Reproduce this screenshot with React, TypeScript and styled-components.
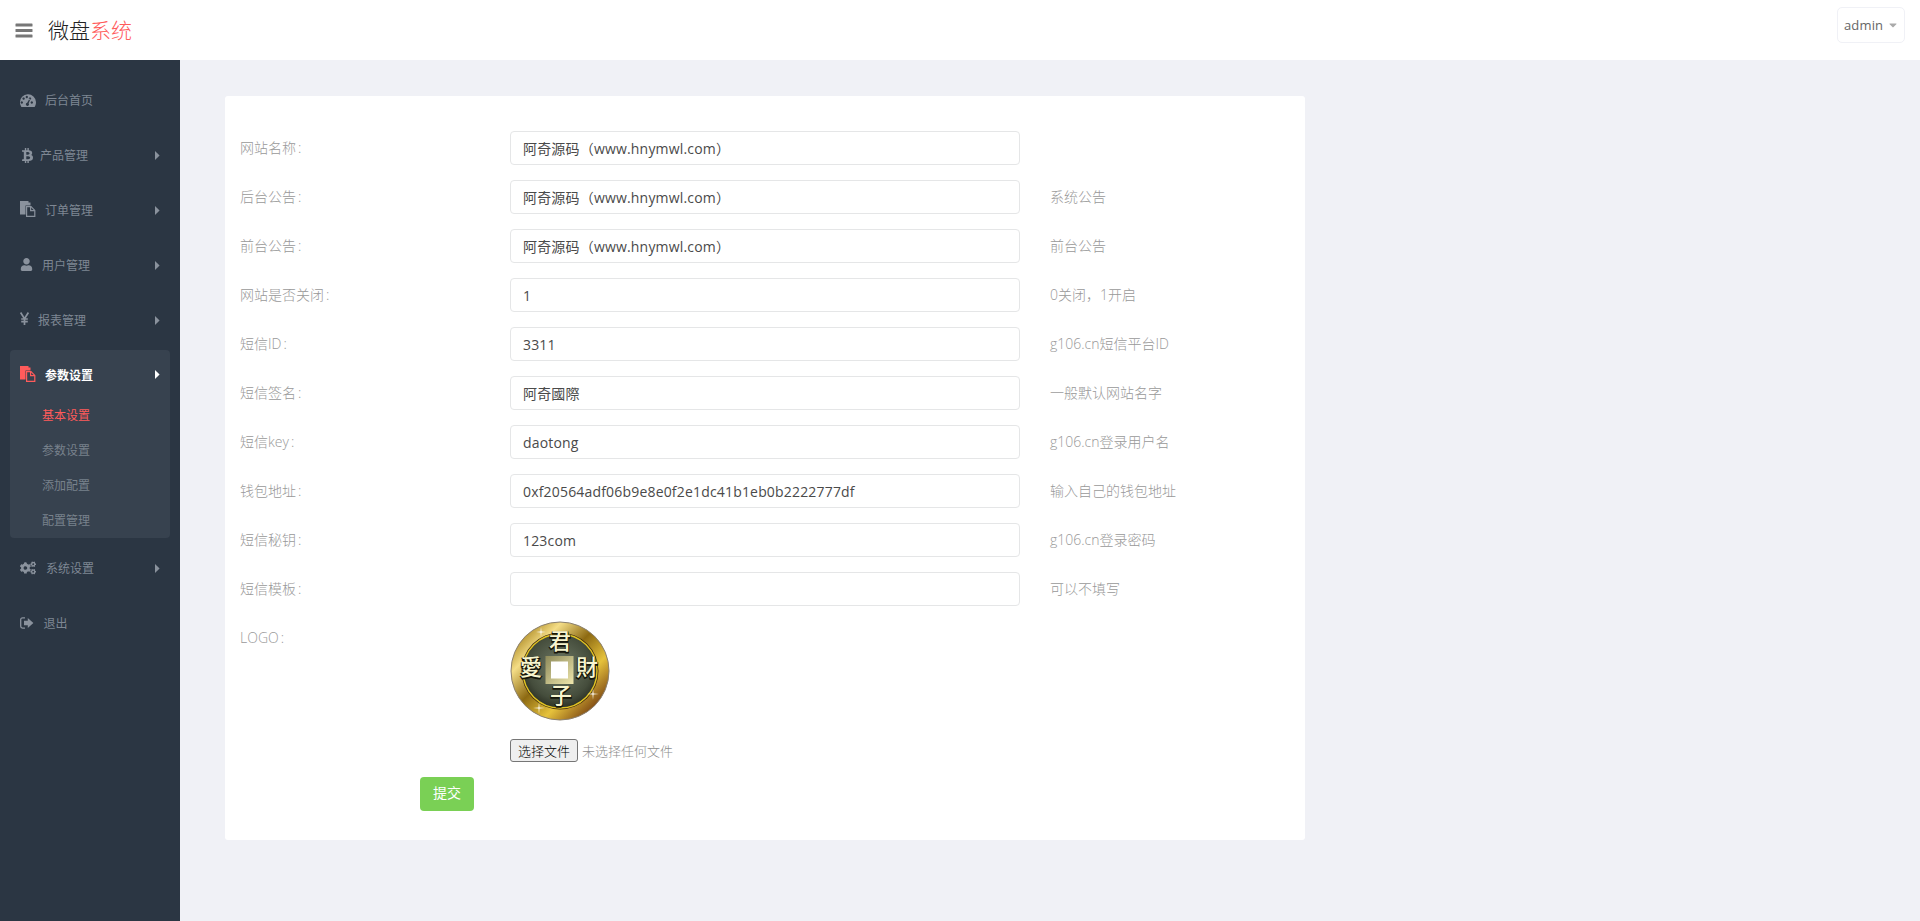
import React from 'react';
import styled, { createGlobalStyle } from 'styled-components';
import { FaBtc, FaUser, FaCogs, FaCaretDown } from 'react-icons/fa';

const FONT = `"Open Sans", "Noto Sans CJK SC", sans-serif`;

const Global = createGlobalStyle`
  html, body { margin: 0; padding: 0; background: #f0f1f6; }
  html { height: 921px; overflow: hidden; }
  body { font-family: ${FONT}; font-size: 14px; height: 921px; overflow: hidden; }
  * { box-sizing: border-box; }
`;

const Header = styled.header`
  height: 60px; background: #fff; display: flex; align-items: center; padding: 0 15px;
`;
const Burger = styled.span`
  display: flex; color: #777; width: 33px;
`;
const Title = styled.div`
  font-size: 21px; color: #222; font-weight: 300; margin-top: -2px;
  span { color: #ff5b5b; }
`;
const UserBtn = styled.button`
  margin-left: auto; align-self: flex-start; margin-top: 7px; width: 68px; height: 36px; background: #fff;
  border: 1px solid #f0f1f6; border-radius: 5px; letter-spacing: 0.15px;
  color: #666; font: 13px ${FONT}; display: flex; align-items: center; justify-content: space-between; padding: 0 5px 0 6px;
  svg { color: #aaa; font-size: 12px; }
`;
const Body = styled.div`
  display: flex; height: 861px;
`;
const Side = styled.nav`
  width: 180px; flex: none; background: #2b3643; padding: 15px 10px 0; display: flex; flex-direction: column; gap: 5px;
`;
const Item = styled.div<{ $active?: boolean }>`
  height: 50px; padding: 0 10px; display: flex; align-items: center; font-size: 12px;
  color: ${p => (p.$active ? '#fff' : '#7e8793')}; font-weight: ${p => (p.$active ? 700 : 400)};
`;
const NavIcon = styled.span<{ $w: number; $active?: boolean; $size?: number; $up?: number }>`
  width: ${p => p.$w}px; flex: none; display: flex; align-items: center; font-size: ${p => p.$size ?? 14}px;
  color: ${p => (p.$active ? '#ff5b5b' : '#8a929d')};
  margin-top: ${p => -(p.$up ?? 0)}px;
`;
const Caret = styled.span<{ $active?: boolean }>`
  margin-left: auto; display: flex; color: ${p => (p.$active ? '#fff' : '#8a929d')};
`;
const Group = styled.div`
  background: #37424f; border-radius: 4px; height: 188px;
  ${Item} { height: 47px; padding-top: 2px; }
`;
const Sub = styled.div<{ $on?: boolean }>`
  height: 35px; padding-left: 32px; display: flex; align-items: center; font-size: 12px;
  color: ${p => (p.$on ? '#ff5b5b' : '#78818c')};
`;
const Main = styled.main`
  flex: 1; padding: 36px 45px;
`;
const Card = styled.form`
  width: 1080px; height: 744px; background: #fff; border-radius: 3px; padding: 35px 15px 0;
  display: flex; flex-direction: column; gap: 15px;
`;
const Row = styled.div`
  display: grid; grid-template-columns: 270px 510px auto; align-items: start;
`;
const Label = styled.label`
  height: 34px; line-height: 34px; color: #999; font-weight: 300;
`;
const Colon = styled.span`
  margin-left: 2px;
`;
const Input = styled.input`
  width: 510px; height: 34px; border: 1px solid #e5e6e7; border-radius: 4px; padding: 0 12px; color: #4a4a4a;
  font: 14px ${FONT}; letter-spacing: 0.18px; outline: none;
`;
const Note = styled.div`
  height: 34px; line-height: 34px; color: #999; padding-left: 30px; font-weight: 300;
`;
const Logo = styled.div`
  display: flex; flex-direction: column; align-items: flex-start;
`;
const FileRow = styled.div`
  display: flex; align-items: center; gap: 4px; margin-top: 18px; color: #8d8d8d; font-size: 13px; font-weight: 300;
`;
const FileBtn = styled.button`
  width: 68px; height: 23px; padding: 0; font: 300 13px ${FONT}; color: #000; background: #efefef; border: 1px solid #767676; border-radius: 3px;
`;
const Submit = styled.button`
  margin: 0 0 0 180px; width: 54px; height: 34px; border: 0; border-radius: 4px; background: #7ad055; color: #fff; font: 14px ${FONT}; line-height: 30px; padding: 0 0 3px;
`;

const rows: [string, string, string][] = [
  ['网站名称', '阿奇源码（www.hnymwl.com）', ''],
  ['后台公告', '阿奇源码（www.hnymwl.com）', '系统公告'],
  ['前台公告', '阿奇源码（www.hnymwl.com）', '前台公告'],
  ['网站是否关闭', '1', '0关闭，1开启'],
  ['短信ID', '3311', 'g106.cn短信平台ID'],
  ['短信签名', '阿奇國際', '一般默认网站名字'],
  ['短信key', 'daotong', 'g106.cn登录用户名'],
  ['钱包地址', '0xf20564adf06b9e8e0f2e1dc41b1eb0b2222777df', '输入自己的钱包地址'],
  ['短信秘钥', '123com', 'g106.cn登录密码'],
  ['短信模板', '', '可以不填写'],
];

const BarsIcon = () => (
  <svg width="18" height="15" viewBox="0 0 18 15" fill="currentColor">
    <rect x="0.5" y="0.5" width="17" height="3" rx="0.6" />
    <rect x="0.5" y="6" width="17" height="3" rx="0.6" />
    <rect x="0.5" y="11.5" width="17" height="3" rx="0.6" />
  </svg>
);

const TachIcon = () => (
  <svg width="16" height="13" viewBox="0 0 16 13" fill="currentColor">
    <path
      fillRule="evenodd"
      d="M0 8.6A8 8 0 0 1 16 8C16 10 15.5 11.6 14.6 13H1.4C.5 11.6 0 10.2 0 8.6ZM3 8.5a1.2 1.2 0 1 0 0 .01ZM4.8 4.6a1.2 1.2 0 1 0 0 .01ZM8 3a1.2 1.2 0 1 0 0 .01ZM13 8.5a1.2 1.2 0 1 0 0 .01ZM11.2 4.6a1.2 1.2 0 1 0 0 .01ZM9.6 4.6 7.2 8.8a1.5 1.5 0 1 0 1.4.6L10.4 5Z"
    />
  </svg>
);

const FilesIcon = () => (
  <svg width="16" height="16" viewBox="0 0 16 16" fill="currentColor">
    <path d="M0 0H8.5V1.5H10.5V4.5H5.5V13.5H0Z" />
    <path d="M6.6 5.6H11L14.8 9.4V15.4H6.6Z" fill="none" stroke="currentColor" strokeWidth="1.2" />
    <path d="M10.6 5.6V9.6H14.8" fill="none" stroke="currentColor" strokeWidth="1.2" />
  </svg>
);

const YenIcon = () => (
  <svg width="9" height="13" viewBox="0 0 9 13" fill="none" stroke="currentColor" strokeWidth="1.7">
    <path d="M.6.5 4.5 6.6 8.4.5M4.5 6V13M1.2 7H7.8M1.2 9.6H7.8" />
  </svg>
);

const OutIcon = () => (
  <svg width="14" height="12" viewBox="0 0 14 12" fill="currentColor">
    <path d="M5 .9H2.5C1.4.9.7 1.6.7 2.7V9.3C.7 10.4 1.4 11.1 2.5 11.1H5" fill="none" stroke="currentColor" strokeWidth="1.3" />
    <path d="M7.8 1 13.4 6 7.8 11V8.2H4V3.8H7.8Z" />
  </svg>
);

const CaretIcon = () => (
  <svg width="5" height="9" viewBox="0 0 5 9" fill="currentColor">
    <path d="M0 0 4.6 4.5 0 9Z" />
  </svg>
);

const Spark = ({ x, y, r }: { x: number; y: number; r: number }) => (
  <path
    d={`M${x - r} ${y}L${x - 0.5} ${y - 0.5}L${x} ${y - r}L${x + 0.5} ${y - 0.5}L${x + r} ${y}L${x + 0.5} ${y + 0.5}L${x} ${y + r}L${x - 0.5} ${y + 0.5}Z`}
    fill="#fff"
  />
);

function Coin() {
  return (
    <svg width="100" height="100" viewBox="0 0 100 100">
      <defs>
        <linearGradient id="rim" x1="0.1" y1="0.1" x2="0.9" y2="0.9">
          <stop offset="0" stopColor="#a9851f" />
          <stop offset="0.2" stopColor="#f4dd86" />
          <stop offset="0.45" stopColor="#8d6a12" />
          <stop offset="0.7" stopColor="#e6c23c" />
          <stop offset="1" stopColor="#6f370d" />
        </linearGradient>
        <radialGradient id="face" cx="0.5" cy="0.45" r="0.62">
          <stop offset="0" stopColor="#717c68" />
          <stop offset="0.7" stopColor="#454d3c" />
          <stop offset="1" stopColor="#1f2218" />
        </radialGradient>
        <linearGradient id="sq" x1="0" y1="0" x2="1" y2="1">
          <stop offset="0" stopColor="#8d8a5a" />
          <stop offset="1" stopColor="#efe7ad" />
        </linearGradient>
      </defs>
      <circle cx="50" cy="50" r="49" fill="url(#rim)" stroke="#8a8070" strokeWidth="1" />
      <circle cx="50" cy="50" r="38.5" fill="#3d2a10" />
      <circle cx="50" cy="50" r="37" fill="url(#face)" stroke="#e2c422" strokeWidth="1.4" />
      <rect x="35.5" y="35" width="28" height="28" fill="url(#sq)" />
      <rect x="41" y="40.5" width="17" height="17" fill="#fff" />
      <g fontFamily='"Noto Sans CJK TC", sans-serif' fontSize="22" fontWeight="500" textAnchor="middle" fill="#15150a" stroke="#15150a" strokeWidth="1.6">
        <text x="50" y="29">君</text>
        <text x="51" y="83">子</text>
        <text x="21" y="55">愛</text>
        <text x="77" y="55">財</text>
      </g>
      <g fontFamily='"Noto Sans CJK TC", sans-serif' fontSize="22" fontWeight="500" textAnchor="middle" fill="#f8f5cf">
        <text x="50" y="28">君</text>
        <text x="51" y="82">子</text>
        <text x="21" y="54">愛</text>
        <text x="77" y="54">財</text>
      </g>
      <Spark x={31} y={11} r={5} />
      <Spark x={29} y={87} r={6} />
      <Spark x={83} y={73} r={6} />
    </svg>
  );
}

export default function App() {
  return (
    <>
      <Global />
      <Header>
        <Burger><BarsIcon /></Burger>
        <Title>微盘<span>系统</span></Title>
        <UserBtn type="button">admin <FaCaretDown /></UserBtn>
      </Header>
      <Body>
        <Side>
          <Item><NavIcon $w={25}><TachIcon /></NavIcon>后台首页</Item>
          <Item><NavIcon $w={20} $size={15}><FaBtc /></NavIcon>产品管理<Caret><CaretIcon /></Caret></Item>
          <Item><NavIcon $w={25} $up={2}><FilesIcon /></NavIcon>订单管理<Caret><CaretIcon /></Caret></Item>
          <Item><NavIcon $w={22} $up={2} $size={13}><FaUser /></NavIcon>用户管理<Caret><CaretIcon /></Caret></Item>
          <Item><NavIcon $w={18} $up={3}><YenIcon /></NavIcon>报表管理<Caret><CaretIcon /></Caret></Item>
          <Group>
            <Item $active><NavIcon $w={25} $active $up={2}><FilesIcon /></NavIcon>参数设置<Caret $active><CaretIcon /></Caret></Item>
            <Sub $on>基本设置</Sub>
            <Sub>参数设置</Sub>
            <Sub>添加配置</Sub>
            <Sub>配置管理</Sub>
          </Group>
          <Item><NavIcon $w={26} $size={16}><FaCogs /></NavIcon>系统设置<Caret><CaretIcon /></Caret></Item>
          <Item><NavIcon $w={23.5}><OutIcon /></NavIcon>退出</Item>
        </Side>
        <Main>
          <Card>
            {rows.map(([l, v, n]) => (
              <Row key={l}>
                <Label>{l}<Colon>:</Colon></Label>
                <Input defaultValue={v} />
                <Note>{n}</Note>
              </Row>
            ))}
            <Row>
              <Label>LOGO<Colon>:</Colon></Label>
              <Logo>
                <Coin />
                <FileRow><FileBtn type="button">选择文件</FileBtn>未选择任何文件</FileRow>
              </Logo>
            </Row>
            <Submit type="button">提交</Submit>
          </Card>
        </Main>
      </Body>
    </>
  );
}
